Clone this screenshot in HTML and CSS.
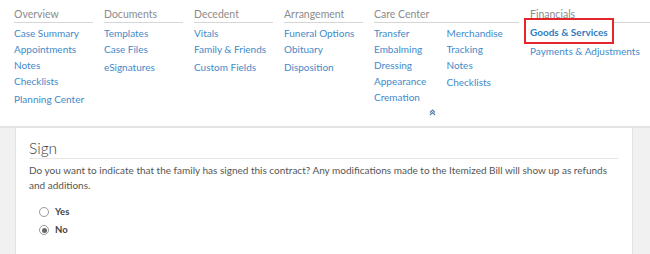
FILE: index.html
```html
<!DOCTYPE html>
<html>
<head>
<meta charset="utf-8">
<link rel="stylesheet" href="styles.css">
</head>
<body>
<header class="nav">
  <div class="col">
    <div class="title">Overview</div>
    <a class="link">Case Summary</a>
    <a class="link">Appointments</a>
    <a class="link">Notes</a>
    <a class="link">Checklists</a>
    <a class="link gap">Planning Center</a>
  </div>
  <div class="col">
    <div class="title">Documents</div>
    <a class="link">Templates</a>
    <a class="link">Case Files</a>
    <a class="link gap">eSignatures</a>
  </div>
  <div class="col">
    <div class="title">Decedent</div>
    <a class="link">Vitals</a>
    <a class="link">Family &amp; Friends</a>
    <a class="link gap">Custom Fields</a>
  </div>
  <div class="col">
    <div class="title">Arrangement</div>
    <a class="link">Funeral Options</a>
    <a class="link">Obituary</a>
    <a class="link gap">Disposition</a>
  </div>
  <div class="col wide">
    <div class="title">Care Center</div>
    <div class="sub">
      <div class="subcol">
        <a class="link">Transfer</a>
        <a class="link">Embalming</a>
        <a class="link">Dressing</a>
        <a class="link">Appearance</a>
        <a class="link">Cremation</a>
        <div class="collapse">
          <svg width="7" height="7" viewBox="0 0 7 7"><path d="M1 3.5 L3.5 1 L6 3.5 M1 6 L3.5 3.5 L6 6" fill="none" stroke="#5a7fae" stroke-width="1.2"/></svg>
        </div>
      </div>
      <div class="subcol">
        <a class="link">Merchandise</a>
        <a class="link">Tracking</a>
        <a class="link">Notes</a>
        <a class="link gap1">Checklists</a>
      </div>
    </div>
  </div>
  <div class="col last">
    <div class="title">Financials</div>
    <a class="link active">Goods &amp; Services</a>
    <a class="link">Payments &amp; Adjustments</a>
  </div>
</header>
<main class="page">
  <section class="card">
    <h2 class="heading">Sign</h2>
    <p class="desc">Do you want to indicate that the family has signed this contract? Any modifications made to the Itemized Bill will show up as refunds and additions.</p>
    <div class="options">
      <label class="opt"><span class="radio"></span>Yes</label>
      <label class="opt"><span class="radio checked"></span>No</label>
    </div>
  </section>
</main>
</body>
</html>
```

FILE: styles.css
```css
* { box-sizing: border-box; }
html, body { margin: 0; padding: 0; }
body {
  width: 650px;
  height: 254px;
  overflow: hidden;
  font-family: Lato, "Open Sans", sans-serif;
  background: #f1f1f1;
}
.nav {
  display: flex;
  gap: 11px;
  height: 128px;
  padding: 7px 0 0 14px;
  background: #fff;
  border-bottom: 2px solid #e4e4e4;
}
.col {
  width: 79px;
  display: flex;
  flex-direction: column;
}
.col.wide { width: 145px; }
.col.last { flex: 1; }
.title {
  font-size: 10.5px;
  line-height: 14px;
  color: #8c8c8c;
  padding-bottom: 1px;
  border-bottom: 1px solid #d6d6d6;
  margin-bottom: 2px;
  white-space: nowrap;
}
.link {
  display: block;
  font-size: 10px;
  line-height: 16px;
  color: #3f8ac9;
  white-space: nowrap;
}
.link.gap { margin-top: 2px; }
.link.gap1 { margin-top: 1px; }
.link.active {
  font-weight: 700;
  color: #2f7cc2;
  background: #fff;
  margin: -7px 0 -1px -6px;
  padding: 5px 4px 3px 4px;
  border: 2px solid #e3262b;
  width: 90px;
  line-height: 14px;
}
.sub { display: flex; gap: 0; }
.subcol { width: 78px; display: flex; flex-direction: column; }
.collapse {
  display: flex;
  padding: 4px 0 0 55px;
  height: 12px;
}
.page {
  display: flex;
  height: 126px;
  padding: 0 17px 0 15px;
}
.card {
  flex: 1;
  background: #fff;
  border-left: 1px solid #e2e2e2;
  border-right: 1px solid #e2e2e2;
  padding: 10px 14px 0 13px;
}
.heading {
  margin: 0;
  font-size: 15.5px;
  font-weight: 300;
  line-height: 20px;
  color: #3a3a3a;
  padding-bottom: 0;
  border-bottom: 1px solid #e6e6e6;
}
.desc {
  margin: 4px 0 0;
  font-size: 10px;
  line-height: 15px;
  color: #555;
}
.options {
  margin-top: 13px;
  padding-left: 10px;
  display: flex;
  flex-direction: column;
  gap: 6px;
}
.opt {
  display: flex;
  align-items: center;
  gap: 6px;
  font-size: 9.5px;
  font-weight: 700;
  color: #444;
  line-height: 12px;
}
.radio {
  width: 10px;
  height: 10px;
  border-radius: 50%;
  border: 1px solid #9a9a9a;
  background: #fff;
  display: inline-flex;
  align-items: center;
  justify-content: center;
}
.radio.checked::after {
  content: "";
  width: 5px;
  height: 5px;
  border-radius: 50%;
  background: #666;
}
```
